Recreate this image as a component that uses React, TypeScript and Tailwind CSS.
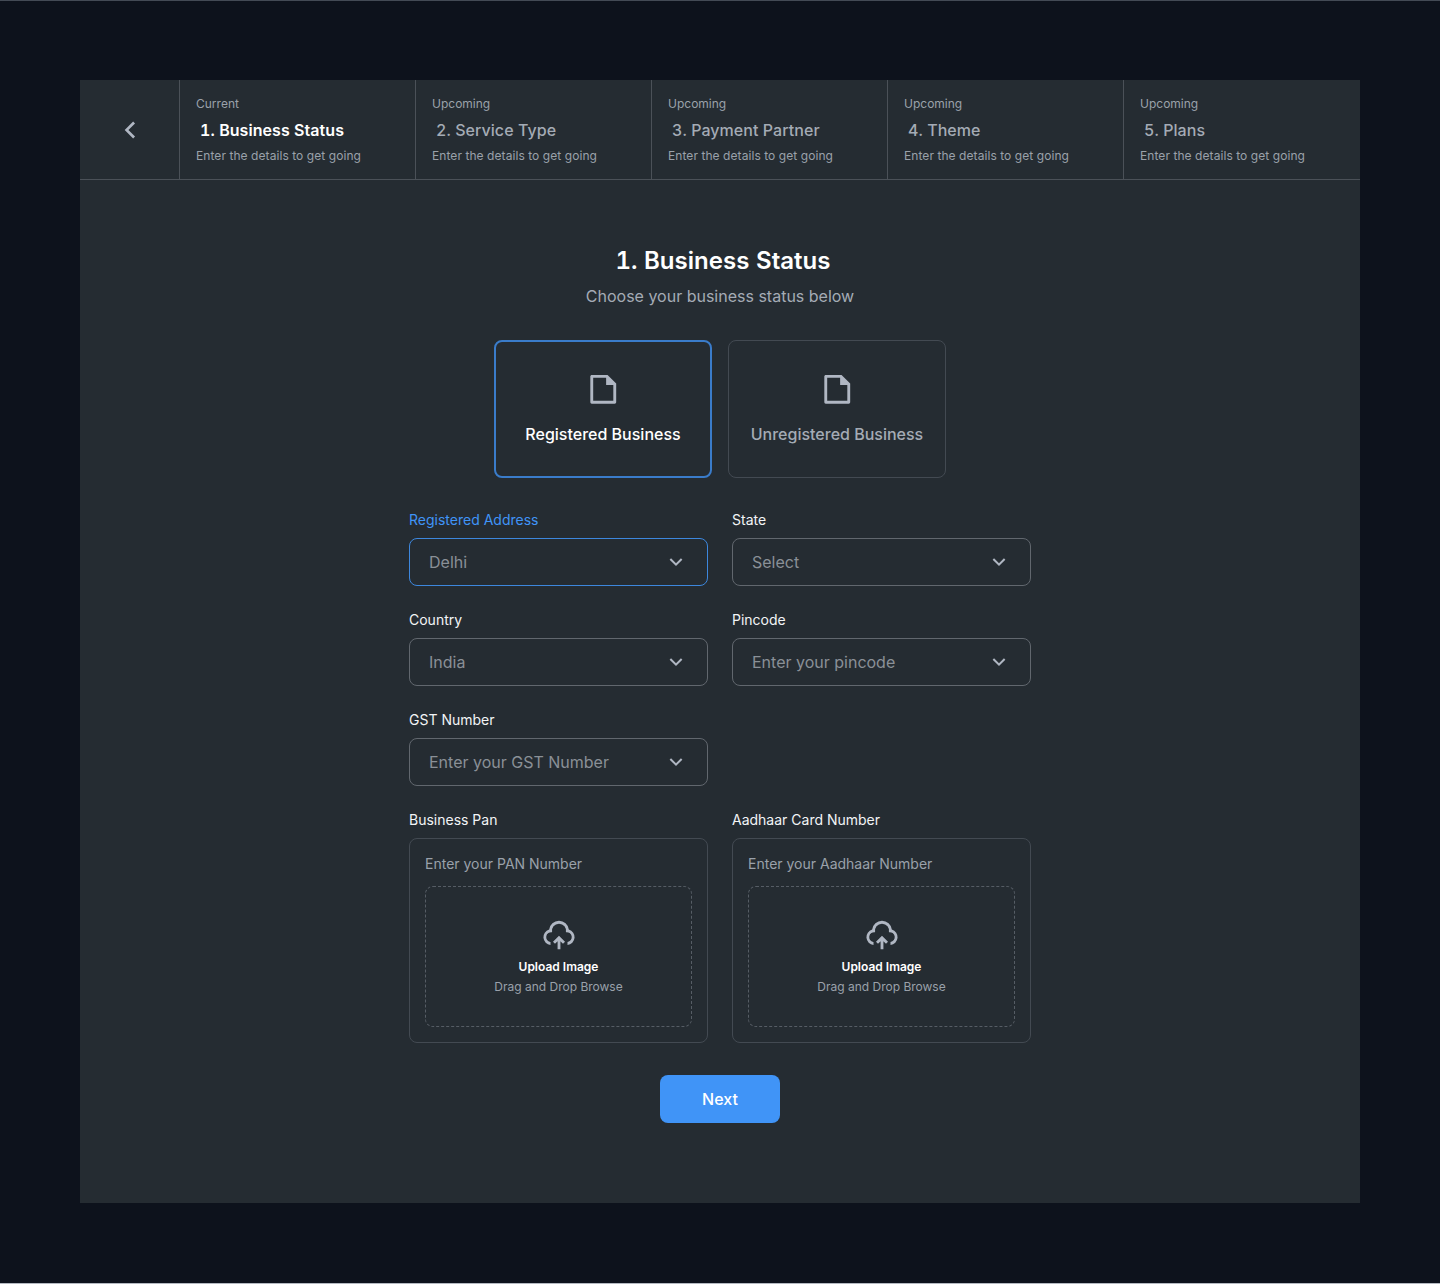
import React from "react";

const steps = [
  { state: "Current", title: "1. Business Status" },
  { state: "Upcoming", title: "2. Service Type" },
  { state: "Upcoming", title: "3. Payment Partner" },
  { state: "Upcoming", title: "4. Theme" },
  { state: "Upcoming", title: "5. Plans" },
];

function Icon({ d, className }: { d: string; className: string }) {
  return (
    <svg viewBox="0 0 24 24" fill="currentColor" className={className} aria-hidden="true">
      <path d={d} />
    </svg>
  );
}

const FILE =
  "M21 8v12.993A1 1 0 0 1 20.007 22H3.993A.993.993 0 0 1 3 21.008V2.992C3 2.455 3.449 2 4.002 2h10.995L21 8zm-2 1h-5V4H5v16h14V9z";
const CLOUD =
  "M12 12.586l4.243 4.242-1.415 1.415L13 16.415V22h-2v-5.587l-1.828 1.83-1.415-1.415L12 12.586zM12 2a7.001 7.001 0 0 1 6.954 6.194 5.5 5.5 0 0 1-.953 10.784v-2.014a3.5 3.5 0 1 0-1.112-6.91 5 5 0 1 0-9.777 0 3.5 3.5 0 0 0-1.292 6.88l.18.03v2.014a5.5 5.5 0 0 1-.954-10.784A7 7 0 0 1 12 2z";
const LEFT = "M10.828 12l4.95 4.95-1.414 1.414L8 12l6.364-6.364 1.414 1.414z";
const DOWN = "M12 13.172l4.95-4.95 1.414 1.414L12 16 5.636 9.636 7.05 8.222z";

function StatusCard({ label, active }: { label: string; active?: boolean }) {
  return (
    <button
      className={
        active
          ? "flex h-[138px] w-[218px] flex-col items-center rounded-lg border-2 border-[#3a7cca] pt-[30px] text-white"
          : "flex h-[138px] w-[218px] flex-col items-center rounded-lg border border-[#434a52] pt-[31px] text-[#a4abb5]"
      }
    >
      <Icon d={FILE} className="size-[34.5px] shrink-0 text-[#b0b7c3]" />
      <span className="mt-[15.5px] text-base leading-6 font-medium">{label}</span>
    </button>
  );
}

function SelectField({ label, value, active }: { label: string; value: string; active?: boolean }) {
  return (
    <div className="h-[100px]">
      <div
        className={
          active
            ? "text-sm leading-5 text-[#4094f7]"
            : "text-sm leading-5 text-[#f2f4f6]"
        }
      >
        {label}
      </div>
      <button
        className={
          active
            ? "mt-2 flex h-12 w-full items-center justify-between rounded-lg border border-[#3d87dd] pr-[19px] pl-[19px]"
            : "mt-2 flex h-12 w-full items-center justify-between rounded-lg border border-[#61676e] pr-[19px] pl-[19px]"
        }
      >
        <span className="text-base text-[#8a9097]">{value}</span>
        <Icon d={DOWN} className="size-6 text-[#b0b7c3]" />
      </button>
    </div>
  );
}

function UploadField({ label, hint }: { label: string; hint: string }) {
  return (
    <div>
      <div className="text-sm leading-5 text-[#f2f4f6]">{label}</div>
      <div className="mt-2 h-[205px] rounded-lg border border-[#434a52] p-[15px]">
        <div className="text-sm leading-5 text-[#9aa1aa]">{hint}</div>
        <div className="mt-3 flex h-[141px] flex-col items-center rounded-lg border border-dashed border-[#565d65] pt-[30.5px]">
          <Icon d={CLOUD} className="size-[34px] shrink-0 text-[#b0b7c3]" />
          <div className="mt-[5.5px] text-xs leading-5 font-semibold text-white">Upload Image</div>
          <div className="text-xs leading-5 text-[#9aa1aa]">Drag and Drop Browse</div>
        </div>
      </div>
    </div>
  );
}

export default function App() {
  return (
    <div className="h-[1284px] w-[1440px] border-t border-b border-t-[#434a55] border-b-[#b4b9c1] bg-[#0d121c] px-20 pt-[79px] font-['Inter',sans-serif]">
      <main className="h-[1123px] bg-[#252c32]">
        <nav className="flex h-[100px] border-b border-[#4b5158]">
          <button className="flex w-[100px] items-center justify-center border-r border-[#4b5158] text-[#b0b7c3]">
            <Icon d={LEFT} className="size-8" />
          </button>
          {steps.map((s, i) => (
            <div
              key={s.title}
              className="w-[236px] border-r border-[#4b5158] pt-3.5 pl-4 text-xs leading-5 text-[#9aa1aa] last:border-r-0"
            >
              <div>{s.state}</div>
              <div
                className={
                  i === 0
                    ? "mt-1 pl-1 text-base leading-6 font-semibold tracking-[0.06px] text-white tabular-nums"
                    : "mt-1 pl-1 text-base leading-6 font-medium tracking-[0.06px] text-[#a4abb5] tabular-nums"
                }
              >
                {s.title}
              </div>
              <div className="mt-1 tracking-[0.07px]">Enter the details to get going</div>
            </div>
          ))}
        </nav>

        <section className="flex flex-col items-center pt-[65px]">
          <h1 className="pl-[6px] text-2xl leading-8 font-semibold tracking-[0.04px] text-white tabular-nums">
            1. Business Status
          </h1>
          <p className="mt-[7px] text-base leading-6 text-[#a4abb5]">Choose your business status below</p>
          <div className="mt-8 flex gap-4">
            <StatusCard label="Registered Business" active />
            <StatusCard label="Unregistered Business" />
          </div>
          <div className="mt-8 grid w-[622px] grid-cols-2 gap-x-6">
            <SelectField label="Registered Address" value="Delhi" active />
            <SelectField label="State" value="Select" />
            <SelectField label="Country" value="India" />
            <SelectField label="Pincode" value="Enter your pincode" />
            <SelectField label="GST Number" value="Enter your GST Number" />
            <div />
            <UploadField label="Business Pan" hint="Enter your PAN Number" />
            <UploadField label="Aadhaar Card Number" hint="Enter your Aadhaar Number" />
          </div>
          <button className="mt-8 h-12 w-[120px] rounded-lg bg-[#4094f7] text-base font-medium text-white">
            Next
          </button>
        </section>
      </main>
    </div>
  );
}
